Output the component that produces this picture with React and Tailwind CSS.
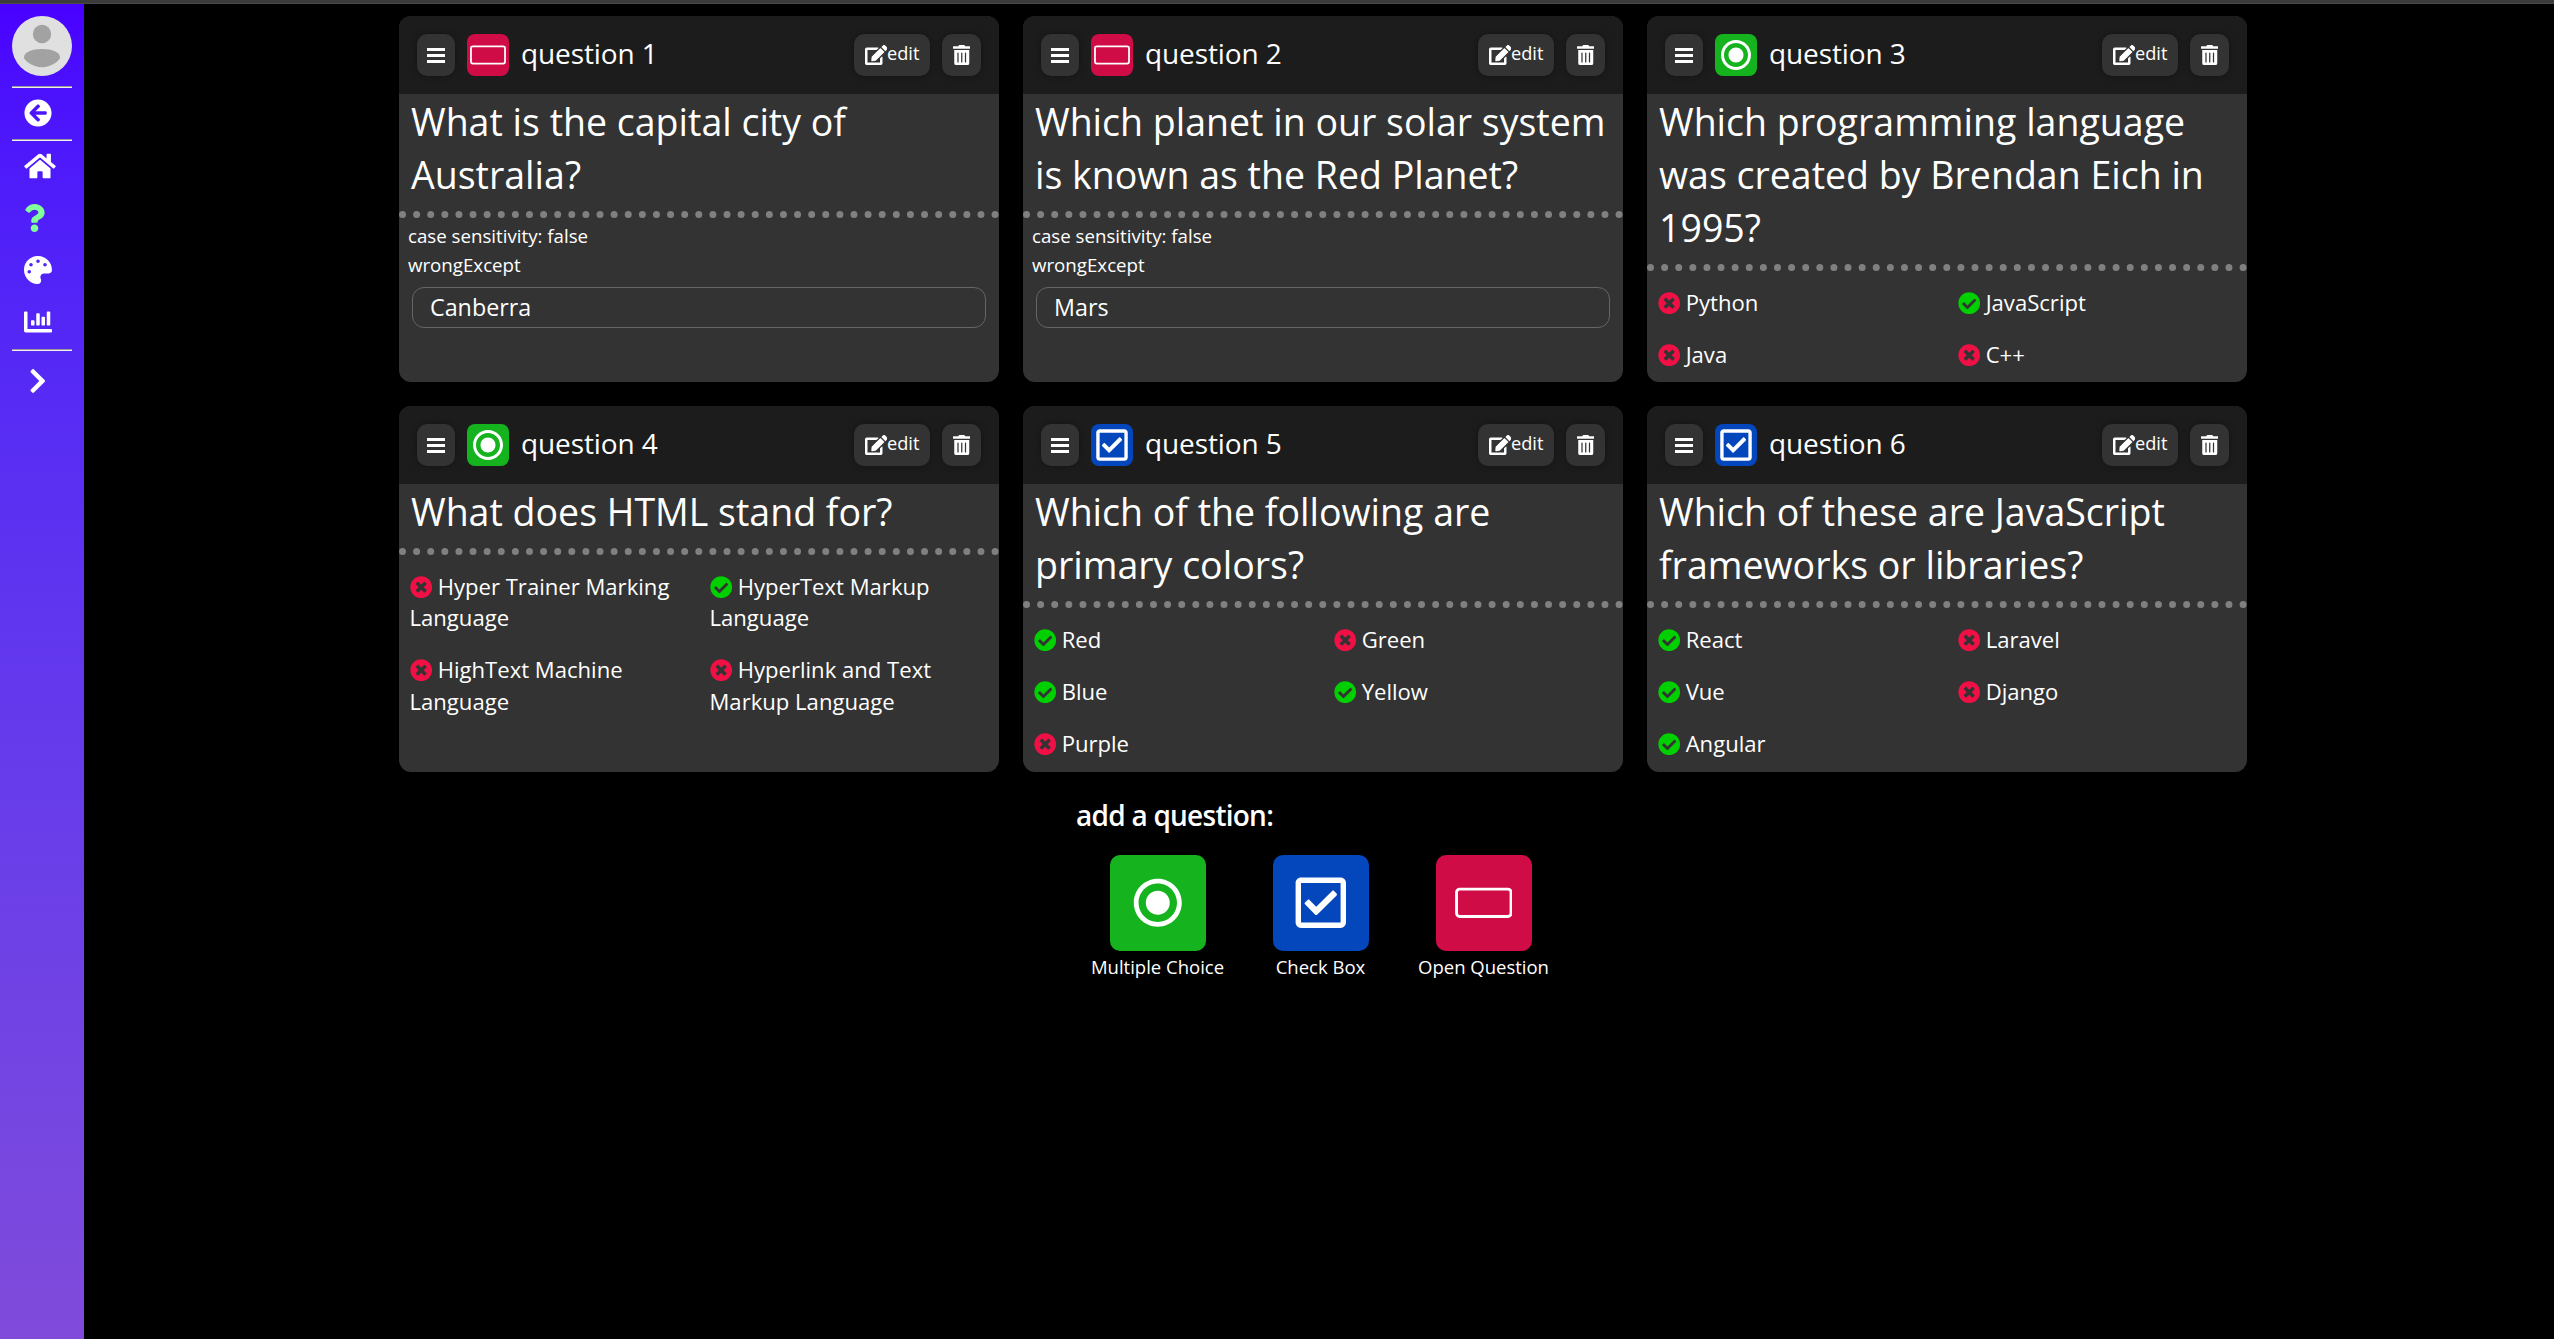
import React from 'react';
import {
  FaArrowCircleLeft,
  FaChartBar,
  FaCheckCircle,
  FaChevronRight,
  FaEdit,
  FaHome,
  FaPalette,
  FaQuestion,
  FaRegCheckSquare,
  FaTimesCircle,
  FaTrashAlt,
} from 'react-icons/fa';
import { MdRadioButtonChecked } from 'react-icons/md';

const questions = [
  {
    type: 'open',
    text: 'What is the capital city of Australia?',
    answer: 'Canberra',
  },
  {
    type: 'open',
    text: 'Which planet in our solar system is known as the Red Planet?',
    answer: 'Mars',
  },
  {
    type: 'multiple',
    text: 'Which programming language was created by Brendan Eich in 1995?',
    options: [
      ['Python', false],
      ['JavaScript', true],
      ['Java', false],
      ['C++', false],
    ],
  },
  {
    type: 'multiple',
    text: 'What does HTML stand for?',
    options: [
      ['Hyper Trainer Marking Language', false],
      ['HyperText Markup Language', true],
      ['HighText Machine Language', false],
      ['Hyperlink and Text Markup Language', false],
    ],
  },
  {
    type: 'checkbox',
    text: 'Which of the following are primary colors?',
    options: [
      ['Red', true],
      ['Green', false],
      ['Blue', true],
      ['Yellow', true],
      ['Purple', false],
    ],
  },
  {
    type: 'checkbox',
    text: 'Which of these are JavaScript frameworks or libraries?',
    options: [
      ['React', true],
      ['Laravel', false],
      ['Vue', true],
      ['Django', false],
      ['Angular', true],
    ],
  },
];

const RectangleIcon = ({ className }) => (
  <svg viewBox="0 0 24 24" className={className} fill="none" stroke="currentColor" strokeWidth="1.2">
    <rect x="0.65" y="6.3" width="22.7" height="11.4" rx="1.3" />
  </svg>
);

const types = {
  multiple: { label: 'Multiple Choice', color: 'bg-[#15b31e]', Icon: MdRadioButtonChecked },
  checkbox: { label: 'Check Box', color: 'bg-[#0446bb]', Icon: FaRegCheckSquare },
  open: { label: 'Open Question', color: 'bg-[#cf0c46]', Icon: RectangleIcon },
};

const Divider = () => (
  <hr className="w-[60px] h-0.5 shrink-0 border-0 border-t border-b border-t-[#9a9a9a] border-b-[#eeeeee]" />
);

const Avatar = () => (
  <svg viewBox="0 0 60 60" className="size-[60px] shrink-0">
    <circle cx="30" cy="30" r="30" fill="#e0e0e0" />
    <circle cx="30" cy="18" r="9.2" fill="#a2a2a2" />
    <path d="M12 41.5C12 36 20 33 30 33s18 3 18 8.5C48 44 40 51.3 30 51.3S12 44 12 41.5z" fill="#a2a2a2" />
  </svg>
);

function Sidebar() {
  return (
    <nav className="w-[84px] shrink-0 flex flex-col items-center pt-3 text-white bg-linear-to-b from-[#4800ff] to-[#804bdb]">
      <Avatar />
      <div className="h-2.5 shrink-0" />
      <Divider />
      <div className="w-full h-[51px] pl-6 pb-px flex items-center">
        <FaArrowCircleLeft className="size-7" />
      </div>
      <Divider />
      <div className="w-full h-[208px] pl-6 pt-[11px] flex flex-col gap-6">
        <FaHome className="w-[32px] h-7" />
        <FaQuestion className="w-[21px] h-7 text-[#80ff9b]" />
        <FaPalette className="size-7" />
        <FaChartBar className="size-7" />
      </div>
      <Divider />
      <div className="w-full pl-[29px] pt-4">
        <FaChevronRight className="w-[17.5px] h-7" />
      </div>
    </nav>
  );
}

function TypeTile({ type }) {
  const { color, Icon } = types[type];
  return (
    <div className={`size-[42px] rounded-lg flex items-center justify-center ${color}`}>
      <Icon className="size-9" />
    </div>
  );
}

function OpenAnswer({ answer }) {
  return (
    <div className="pt-[3px] text-[18.7px] leading-[29px]">
      <p className="pl-[9px]">case sensitivity: false</p>
      <p className="pl-[9px]">wrongExcept</p>
      <div className="mt-2 mx-[13px] h-[41px] pl-[17px] pb-px flex items-center rounded-xl border border-[#666] text-[23.3px]">
        {answer}
      </div>
    </div>
  );
}

function Options({ options }) {
  return (
    <div className="grid grid-cols-2 pt-1.5">
      {options.map(([label, correct]) => (
        <div key={label} className="pl-[10.5px] pr-2.5 pt-2.5 pb-[11px] text-[22.1px] leading-[31.2px]">
          {correct ? (
            <FaCheckCircle className="inline size-[22.4px] align-[-3px] text-[#00cf00]" />
          ) : (
            <FaTimesCircle className="inline size-[22.4px] align-[-3px] text-[#f01045]" />
          )}{' '}
          {label}
        </div>
      ))}
    </div>
  );
}

function QuestionCard({ number, question }) {
  const button = 'h-[42px] rounded-[10px] bg-[#333] flex items-center justify-center shadow-[0_0_6px_rgba(0,0,0,0.35)]';
  return (
    <section className="h-[366px] rounded-xl overflow-hidden bg-[#333]">
      <header className="h-[78px] px-[18px] flex items-center gap-3 bg-[#1c1c1c]">
        <button className={`w-[38px] ${button}`}>
          <svg viewBox="0 0 18 15" className="w-[18px] h-[15px]" fill="currentColor">
            <path d="M0 0h18v3H0zM0 6h18v3H0zM0 12h18v3H0z" />
          </svg>
        </button>
        <TypeTile type={question.type} />
        <h3 className="pb-[5px] text-[28px] leading-10 tracking-[-0.1px]">question {number}</h3>
        <button className={`ml-auto w-[76px] text-[18.2px] ${button}`}>
          <FaEdit className="w-[22.5px] h-5" />
          <span className="pb-[3px]">edit</span>
        </button>
        <button className={`w-[39px] ${button}`}>
          <FaTrashAlt className="w-[17.5px] h-5" />
        </button>
      </header>
      <p className="px-3 pt-px pb-2.5 text-[37.5px] leading-[53px] border-b-[7px] border-dotted border-[#808080]">
        {question.text}
      </p>
      {question.type === 'open' ? (
        <OpenAnswer answer={question.answer} />
      ) : (
        <Options options={question.options} />
      )}
    </section>
  );
}

function AddQuestion() {
  return (
    <div className="w-[489px] ml-[677px] mt-[22px]">
      <h2 className="text-[28px] leading-[42px] font-semibold tracking-[-0.75px]">add a question:</h2>
      <div className="mt-[19px] grid grid-cols-3">
        {['multiple', 'checkbox', 'open'].map((type) => {
          const { label, color, Icon } = types[type];
          return (
            <div key={type} className="flex flex-col items-center">
              <div className={`size-24 rounded-[10px] flex items-center justify-center ${color}`}>
                <Icon className="size-[57.6px]" />
              </div>
              <span className="mt-[3px] text-[18.5px] leading-[26px]">{label}</span>
            </div>
          );
        })}
      </div>
    </div>
  );
}

export default function App() {
  return (
    <div className="h-screen flex flex-col overflow-hidden bg-black text-white font-['Open_Sans',sans-serif]">
      <div className="h-1 shrink-0 bg-[#3b3b3b] border-b border-[#4a4a4a]" />
      <div className="flex-1 flex">
        <Sidebar />
        <main className="pl-[315px] pt-3">
          <div className="w-[1848px] grid grid-cols-3 gap-6">
            {questions.map((question, i) => (
              <QuestionCard key={question.text} number={i + 1} question={question} />
            ))}
          </div>
          <AddQuestion />
        </main>
      </div>
    </div>
  );
}
